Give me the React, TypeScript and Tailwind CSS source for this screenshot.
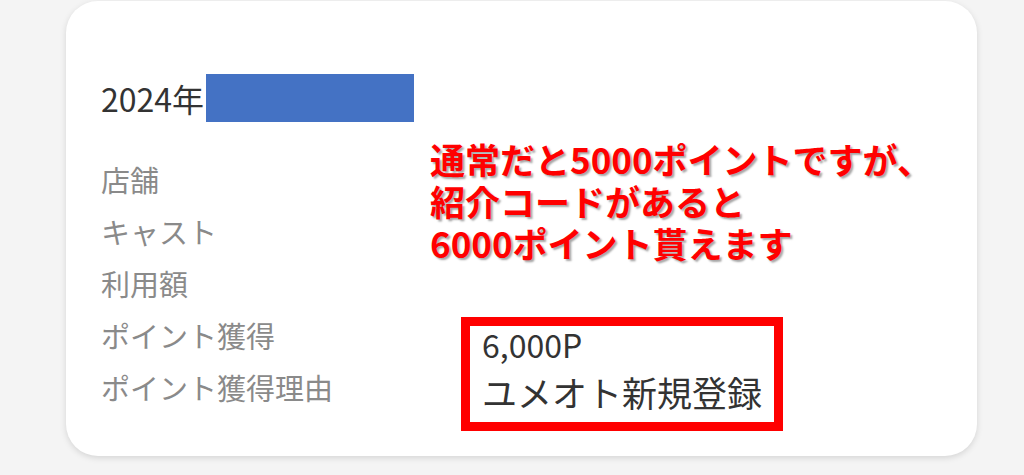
export default function App() {
  const labels = ['店舗', 'キャスト', '利用額', 'ポイント獲得', 'ポイント獲得理由'];

  return (
    <div className="h-[475px] w-[1024px] bg-[#f4f4f4] pl-[66px] pt-px font-['Noto_Sans_CJK_JP',sans-serif]">
      {/* カード */}
      <div className="h-[455px] w-[911px] rounded-[32px] bg-white pl-[35px] shadow-[0_2px_6px_rgba(0,0,0,0.13)]">
        {/* 日付 */}
        <div className="flex items-center pt-[73px]">
          <span className="text-[32px] leading-[48px] text-[#333]">2024年</span>
          <div className="ml-[2px] h-[48px] w-[208px] bg-[#4472c4]" />
        </div>

        <div className="mt-[16px] flex items-start">
          {/* ラベル */}
          <div className="w-[329px] pt-[15px]">
            {labels.map((l) => (
              <div key={l} className="text-[29px] leading-[52px] text-[#8a8a8a]">
                {l}
              </div>
            ))}
          </div>

          {/* 注釈と値 */}
          <div className="flex flex-col">
            <div className="text-[35px] font-bold leading-[42px] text-[#ff0000] [text-shadow:2px_2px_2px_rgba(0,0,0,0.35)]">
              <div>通常だと5000ポイントですが、</div>
              <div>紹介コードがあると</div>
              <div>6000ポイント貰えます</div>
            </div>
            <div className="ml-[31px] mt-[53px] h-[114px] w-[322px] border-[9px] border-[#ff0000] pl-[12px] text-[#333]">
              <div className="text-[32px] leading-[36px]">6,000P</div>
              <div className="mt-[8px] text-[35px] leading-[44px]">ユメオト新規登録</div>
            </div>
          </div>
        </div>
      </div>
    </div>
  );
}
